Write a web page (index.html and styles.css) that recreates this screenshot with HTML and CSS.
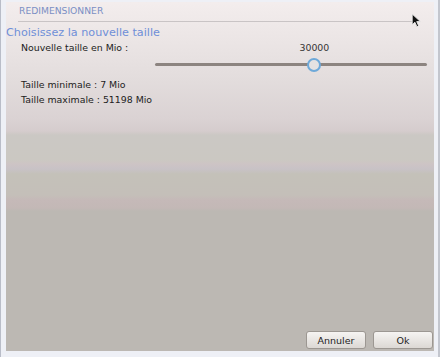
FILE: index.html
```html
<!DOCTYPE html>
<html lang="fr">
<head>
  <meta charset="UTF-8">
  <title>Redimensionner</title>
  <link rel="stylesheet" href="styles.css">
</head>
<body>
  <div class="frame">
    <div class="panel">
      <div class="title">REDIMENSIONNER</div>
      <div class="heading">Choisissez la nouvelle taille</div>

      <div class="size-row">
        <div class="label">Nouvelle taille en Mio :</div>
        <div class="slider">
          <!-- 30000 sur 7..51198 -->
          <div class="slider-value" style="left: 58.6%">30000</div>
          <div class="track">
            <div class="handle" style="left: 58.6%"></div>
          </div>
        </div>
      </div>

      <div class="info">
        <div>Taille minimale : 7 Mio</div>
        <div>Taille maximale : 51198 Mio</div>
      </div>

      <div class="spacer"></div>

      <div class="buttons">
        <button class="btn">Annuler</button>
        <button class="btn">Ok</button>
      </div>

      <svg class="cursor" width="11" height="15" viewBox="0 0 10 14">
        <path d="M1 1 L1 11 L3.5 8.6 L5.4 12.8 L7 12 L5.2 8 L8.6 8 Z" fill="#111" stroke="#eee" stroke-width="0.8"/>
      </svg>
    </div>
  </div>
</body>
</html>
```

FILE: styles.css
```css
body {
  margin: 0;
  width: 440px;
  height: 357px;
  overflow: hidden;
  background: #eef0f6;
  font-family: "DejaVu Sans", sans-serif;
  color: #222;
}
.frame {
  height: 357px;
  box-sizing: border-box;
  padding: 2px 4px 6px 5px;
  border-left: 1px solid #b9bdc8;
  border-right: 2px solid #c3c6ce;
}
.panel {
  position: relative;
  height: 349px;
  display: flex;
  flex-direction: column;
  background: linear-gradient(180deg,
    #f3eded 0px,
    #ebe5e5 40px,
    #e2dcdc 80px,
    #dad2d3 118px,
    #d5cccd 129px,
    #cbc8c4 133px,
    #cbc8c2 158px,
    #cdc4c5 162px,
    #c8c2c6 167px,
    #c4c1b9 172px,
    #c4bfb9 193px,
    #c5b9b8 198px,
    #c3b8b6 206px,
    #bcb8b3 209px,
    #bcb8b3 100%);
}
.title {
  margin: 0 20px 0 12px;
  padding: 3px 0 0 1px;
  height: 16px;
  font-size: 9.2px;
  color: #7b8fc4;
  border-bottom: 1px solid #c9c4c5;
}
.heading {
  margin-top: 4px;
  font-size: 11.2px;
  color: #6f8fd8;
  line-height: 14px;
}
.size-row {
  display: flex;
  padding-left: 15px;
  margin-top: 1px;
}
.label {
  width: 134px;
  font-size: 9.4px;
  line-height: 14px;
}
.slider {
  position: relative;
  flex: 1;
  margin-right: 7px;
  height: 36px;
}
.slider-value {
  position: absolute;
  top: 0;
  transform: translateX(-50%);
  font-size: 9.4px;
  line-height: 14px;
  color: #333;
}
.track {
  position: absolute;
  left: 0;
  right: 0;
  top: 22px;
  height: 3px;
  border-radius: 2px;
  background: #8c8480;
}
.handle {
  position: absolute;
  top: -5px;
  width: 10px;
  height: 10px;
  margin-left: -7px;
  border-radius: 50%;
  background: #e4e2e2;
  border: 2px solid #6ea9d9;
}
.info {
  padding-left: 15px;
  margin-top: 0;
  font-size: 9.4px;
  line-height: 15px;
}
.spacer {
  flex: 1;
}
.buttons {
  display: flex;
  justify-content: flex-end;
  gap: 7px;
  padding: 0 1px 2px 0;
}
.btn {
  width: 60px;
  height: 18px;
  padding: 0;
  font-family: "DejaVu Sans", sans-serif;
  font-size: 9.5px;
  color: #222;
  border: 1px solid #9c9792;
  border-radius: 3px;
  background: linear-gradient(180deg, #f6f4f2, #dcd8d4);
}
.cursor {
  position: absolute;
  left: 405px;
  top: 11px;
}
```
